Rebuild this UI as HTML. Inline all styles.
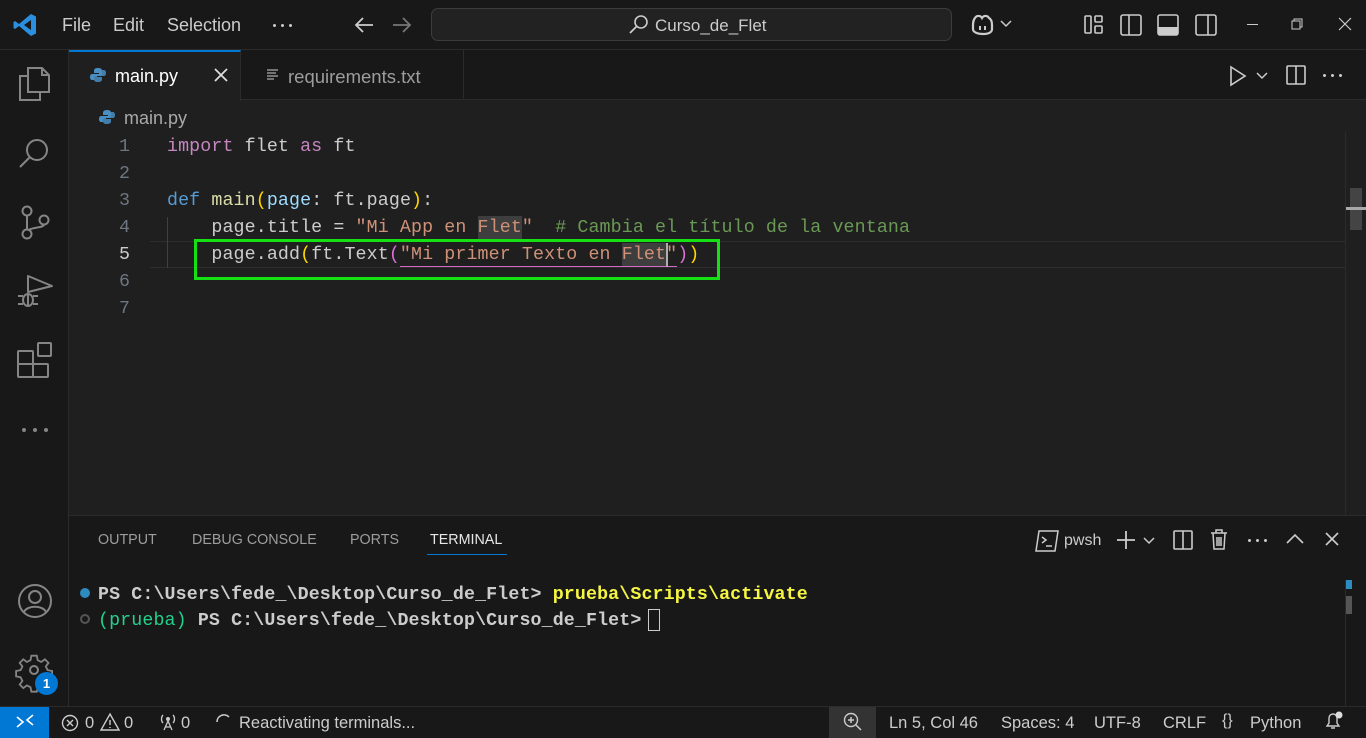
<!DOCTYPE html>
<html><head><meta charset="utf-8"><style>
*{box-sizing:border-box;margin:0;padding:0}
body{width:1366px;height:738px;overflow:hidden;background:#1f1f1f;font-family:"Liberation Sans",sans-serif;color:#ccc;position:relative}
.abs{position:absolute}
.mono{font-family:"Liberation Mono",monospace;font-size:18.3px;white-space:pre;letter-spacing:0.12px}
svg{position:absolute;overflow:visible}
.ic{stroke:#858585;fill:none;stroke-width:2}
.dots{position:absolute;display:flex;gap:5px}
.dots i{display:block;width:3px;height:3px;border-radius:50%;background:#ccc}
</style></head><body>
<!-- title bar -->
<div class="abs" style="left:0;top:0;width:1366px;height:50px;background:#181818;border-bottom:1px solid #2b2b2b"></div>
<svg style="left:12px;top:12px" width="26" height="26" viewBox="0 0 26 26"><path d="M19 2 L24 4.5 V21.5 L19 24 L7 14 L3 17 L1.5 16 V10 L3 9 L7 12 Z M19 8 L12 13 L19 18 Z" fill="#2a8fe0" fill-rule="evenodd"/></svg>
<div class="abs" style="left:62px;top:15px;font-size:18px;color:#ccc">File</div>
<div class="abs" style="left:113px;top:15px;font-size:18px;color:#ccc">Edit</div>
<div class="abs" style="left:167px;top:15px;font-size:18px;color:#ccc">Selection</div>
<div class="dots" style="left:273px;top:24px"><i></i><i></i><i></i></div>
<svg style="left:354px;top:16px" width="20" height="18"><path d="M19 9H2M9 2L2 9L9 16" stroke="#ccc" stroke-width="1.8" fill="none"/></svg>
<svg style="left:392px;top:16px" width="20" height="18"><path d="M1 9H18M11 2L18 9L11 16" stroke="#777" stroke-width="1.8" fill="none"/></svg>
<div class="abs" style="left:431px;top:8px;width:521px;height:33px;border:1px solid #3c3c3c;border-radius:7px;background:#222"></div>
<svg style="left:628px;top:14px" width="22" height="22"><circle cx="13" cy="8" r="6" style="stroke:#ccc;stroke-width:1.6;fill:none"/><path d="M9 12L2 19" stroke="#ccc" stroke-width="1.8"/></svg>
<div class="abs" style="left:655px;top:16px;font-size:17px;color:#ccc">Curso_de_Flet</div>
<svg style="left:970px;top:13px" width="26" height="24"><path d="M5 5a4 4 0 0 1 7 0a4 4 0 0 1 7 0c2 1 3 4 3 7v4c0 3-3 5-9 5s-10-2-10-5v-4c0-3 1-6 2-7z" fill="none" stroke="#ccc" stroke-width="2.2"/><rect x="9" y="13" width="2" height="4" fill="#ccc"/><rect x="14" y="13" width="2" height="4" fill="#ccc"/></svg>
<svg style="left:1000px;top:20px" width="12" height="8"><path d="M1 1L6 6L11 1" stroke="#ccc" stroke-width="1.5" fill="none"/></svg>
<svg style="left:1084px;top:15px" width="20" height="20"><rect x="1" y="1" width="6" height="17" rx="1" fill="none" stroke="#ccc" stroke-width="1.6"/><rect x="11" y="1" width="7" height="6" rx="1" fill="none" stroke="#ccc" stroke-width="1.6"/><rect x="11" y="11" width="7" height="7" rx="1" fill="none" stroke="#ccc" stroke-width="1.6"/></svg>
<svg style="left:1120px;top:14px" width="22" height="22"><rect x="1" y="1" width="20" height="20" rx="2" fill="none" stroke="#ccc" stroke-width="1.6"/><path d="M9 1V21" stroke="#ccc" stroke-width="1.6"/></svg>
<svg style="left:1157px;top:14px" width="22" height="22"><rect x="1" y="1" width="20" height="20" rx="2" fill="none" stroke="#ccc" stroke-width="1.6"/><rect x="1" y="13" width="20" height="8" fill="#ccc"/></svg>
<svg style="left:1195px;top:14px" width="22" height="22"><rect x="1" y="1" width="20" height="20" rx="2" fill="none" stroke="#ccc" stroke-width="1.6"/><path d="M13 1V21" stroke="#ccc" stroke-width="1.6"/></svg>
<div class="abs" style="left:1247px;top:24px;width:11px;height:1px;background:#ccc"></div>
<svg style="left:1291px;top:18px" width="12" height="12"><rect x="1" y="3" width="8" height="8" fill="none" stroke="#ccc"/><path d="M3 3V1H11V9H9" fill="none" stroke="#ccc"/></svg>
<svg style="left:1338px;top:17px" width="14" height="14"><path d="M1 1L13 13M13 1L1 13" stroke="#ccc" stroke-width="1.2"/></svg>

<!-- activity bar -->
<div class="abs" style="left:0;top:50px;width:69px;height:656px;background:#181818;border-right:1px solid #2b2b2b"></div>
<svg style="left:18px;top:66px" width="34" height="36"><path d="M10 2H24L31 9V26H10Z M24 2V9H31" class="ic"/><path d="M10 10H2V34H22V26" class="ic"/></svg>
<svg style="left:18px;top:135px" width="34" height="34"><circle cx="19" cy="15" r="10" class="ic"/><path d="M12 22L2 32" class="ic"/></svg>
<svg style="left:20px;top:205px" width="30" height="36"><circle cx="7" cy="6" r="4.5" class="ic"/><circle cx="7" cy="29" r="4.5" class="ic"/><circle cx="24" cy="15" r="4.5" class="ic"/><path d="M7 10.5V24.5M24 19.5C24 23 12 22 9 25" class="ic"/></svg>
<svg style="left:16px;top:274px" width="38" height="36"><path d="M12 2V18L36 12L12 2Z" class="ic" stroke-linejoin="round"/><ellipse cx="12" cy="26" rx="5" ry="6" class="ic"/><path d="M2 22H7M2 30H7M17 22H22M17 30H22M12 20V32" class="ic"/></svg>
<svg style="left:17px;top:342px" width="36" height="38"><rect x="1" y="9" width="15" height="13" class="ic" rx="1"/><rect x="1" y="22" width="15" height="13" class="ic" rx="1"/><rect x="16" y="22" width="15" height="13" class="ic" rx="1"/><rect x="21" y="1" width="13" height="13" class="ic" rx="1"/></svg>
<div class="dots" style="left:22px;top:428px;gap:7px"><i style="background:#858585;width:4px;height:4px"></i><i style="background:#858585;width:4px;height:4px"></i><i style="background:#858585;width:4px;height:4px"></i></div>
<svg style="left:17px;top:583px" width="36" height="36"><circle cx="18" cy="18" r="16" class="ic"/><circle cx="18" cy="14" r="6" class="ic"/><path d="M7 29C10 22 26 22 29 29" class="ic"/></svg>
<svg style="left:17px;top:653px" width="36" height="36"><path d="M15 2h6l1 5 4 2 4-3 4 4-3 4 2 4 5 1v6l-5 1-2 4 3 4-4 4-4-3-4 2-1 5h-6l-1-5-4-2-4 3-4-4 3-4-2-4-5-1v-6l5-1 2-4-3-4 4-4 4 3 4-2z" transform="scale(0.9) translate(1,1)" class="ic"/><circle cx="17" cy="17" r="4" class="ic"/></svg>
<div class="abs" style="left:35px;top:672px;width:23px;height:23px;border-radius:50%;background:#0078d4;color:#fff;font-size:13px;font-weight:bold;text-align:center;line-height:23px">1</div>

<!-- tabs -->
<div class="abs" style="left:69px;top:50px;width:1297px;height:50px;background:#181818;border-bottom:1px solid #2b2b2b"></div>
<div class="abs" style="left:69px;top:50px;width:172px;height:51px;background:#1f1f1f;border-top:2px solid #0078d4;border-right:1px solid #2b2b2b"></div>
<div class="abs" style="left:241px;top:50px;width:223px;height:50px;border-right:1px solid #2b2b2b"></div>
<svg style="left:90px;top:67px" width="16" height="16"><path d="M8 1C4 1 4 3 4 4V6H9V7H2C1 7 0 8 0 10S1 13 2 13H4V11C4 10 5 9 6 9H10C11 9 12 8 12 7V4C12 2 11 1 8 1Z" fill="#4a8fc4"/><path d="M8 15C12 15 12 13 12 12V10H7V9H14C15 9 16 8 16 6S15 3 14 3H12V5C12 6 11 7 10 7H6C5 7 4 8 4 9V12C4 14 5 15 8 15Z" fill="#4a8fc4" opacity=".85"/></svg>
<div class="abs" style="left:115px;top:66px;font-size:18px;color:#fff">main.py</div>
<svg style="left:214px;top:68px" width="14" height="14"><path d="M1 1L13 13M13 1L1 13" stroke="#ddd" stroke-width="1.8"/></svg>
<svg style="left:267px;top:69px" width="12" height="12"><path d="M0 1H11M0 4H9M0 7H11M0 10H7" stroke="#aaa" stroke-width="1.3"/></svg>
<div class="abs" style="left:288px;top:66px;font-size:18.5px;color:#9d9d9d">requirements.txt</div>
<svg style="left:1230px;top:66px" width="16" height="20"><path d="M1 1L15 10L1 19Z" fill="none" stroke="#ccc" stroke-width="1.6"/></svg>
<svg style="left:1256px;top:72px" width="12" height="8"><path d="M1 1L6 6L11 1" stroke="#ccc" stroke-width="1.5" fill="none"/></svg>
<svg style="left:1286px;top:65px" width="20" height="20"><rect x="1" y="1" width="18" height="18" rx="1" fill="none" stroke="#ccc" stroke-width="1.6"/><path d="M10 1V19" stroke="#ccc" stroke-width="1.6"/></svg>
<div class="dots" style="left:1323px;top:74px"><i></i><i></i><i></i></div>

<!-- breadcrumb -->
<svg style="left:99px;top:109px" width="16" height="16"><path d="M8 1C4 1 4 3 4 4V6H9V7H2C1 7 0 8 0 10S1 13 2 13H4V11C4 10 5 9 6 9H10C11 9 12 8 12 7V4C12 2 11 1 8 1Z" fill="#4a8fc4"/><path d="M8 15C12 15 12 13 12 12V10H7V9H14C15 9 16 8 16 6S15 3 14 3H12V5C12 6 11 7 10 7H6C5 7 4 8 4 9V12C4 14 5 15 8 15Z" fill="#4a8fc4" opacity=".85"/></svg>
<div class="abs" style="left:124px;top:108px;font-size:18px;color:#a9a9a9">main.py</div>

<!-- code -->
<div class="abs" style="left:150px;top:241px;width:1195px;height:27px;border-top:1px solid #2e2e2e;border-bottom:1px solid #2e2e2e"></div>
<div class="abs" style="left:167px;top:217px;width:1px;height:27px;background:#404040"></div>
<div class="abs" style="left:167px;top:244px;width:1px;height:24px;background:#404040"></div>
<div class="abs" style="left:478px;top:216px;width:44px;height:24px;background:#3e3e3e"></div>
<div class="abs" style="left:622px;top:243px;width:44px;height:24px;background:#3e3e3e"></div>
<div class="abs" style="left:400px;top:266px;width:277px;height:1px;background:#d567c9"></div>
<div class="abs mono" style="left:115px;top:134px;line-height:27px;color:#6e7681;text-align:right;width:15px;letter-spacing:0">1
2
3
4
<span style="color:#ccc">5</span>
6
7</div>
<div class="abs mono" style="left:167px;top:134px;line-height:27px;color:#cccccc"><span style="color:#c586c0">import</span> flet <span style="color:#c586c0">as</span> ft

<span style="color:#569cd6">def</span> <span style="color:#dcdcaa">main</span><span style="color:#ffd700">(</span><span style="color:#9cdcfe">page</span>: ft.page<span style="color:#ffd700">)</span>:
    page.title = <span style="color:#ce9178">"Mi App en Flet"</span>  <span style="color:#6a9955"># Cambia el título de la ventana</span>
    page.add<span style="color:#ffd700">(</span>ft.Text<span style="color:#da70d6">(</span><span style="color:#ce9178">"Mi primer Texto en Flet"</span><span style="color:#da70d6">)</span><span style="color:#ffd700">)</span></div>
<div class="abs" style="left:666px;top:243px;width:2px;height:24px;background:#aeafad"></div>
<div class="abs" style="left:194px;top:239px;width:526px;height:41px;border:3px solid #14e014"></div>
<!-- scrollbar -->
<div class="abs" style="left:1345px;top:132px;width:1px;height:383px;background:#2b2b2b"></div>
<div class="abs" style="left:1350px;top:188px;width:12px;height:42px;background:#444"></div>
<div class="abs" style="left:1346px;top:207px;width:20px;height:3px;background:#aaa"></div>

<!-- panel -->
<div class="abs" style="left:69px;top:515px;width:1297px;height:191px;background:#181818;border-top:1px solid #2b2b2b"></div>
<div class="abs" style="left:98px;top:532px;font-size:14.3px;color:#9d9d9d">OUTPUT</div>
<div class="abs" style="left:192px;top:532px;font-size:14.3px;color:#9d9d9d">DEBUG CONSOLE</div>
<div class="abs" style="left:350px;top:532px;font-size:14.3px;color:#9d9d9d">PORTS</div>
<div class="abs" style="left:430px;top:532px;font-size:14.3px;color:#e7e7e7">TERMINAL</div>
<div class="abs" style="left:427px;top:554px;width:80px;height:1px;background:#0078d4"></div>
<svg style="left:1035px;top:530px" width="24" height="22"><path d="M4 1H23L20 21H1Z" fill="none" stroke="#ccc" stroke-width="1.5"/><path d="M7 7L11 10L7 13M11 16H17" stroke="#ccc" stroke-width="1.5" fill="none"/></svg>
<div class="abs" style="left:1064px;top:532px;font-size:16px;color:#ccc">pwsh</div>
<svg style="left:1116px;top:530px" width="20" height="20"><path d="M10 1V19M1 10H19" stroke="#ccc" stroke-width="1.8"/></svg>
<svg style="left:1143px;top:537px" width="12" height="8"><path d="M1 1L6 6L11 1" stroke="#ccc" stroke-width="1.5" fill="none"/></svg>
<svg style="left:1173px;top:530px" width="20" height="20"><rect x="1" y="1" width="18" height="18" rx="1" fill="none" stroke="#ccc" stroke-width="1.6"/><path d="M10 1V19" stroke="#ccc" stroke-width="1.6"/></svg>
<svg style="left:1210px;top:529px" width="18" height="21"><path d="M1 4H17M6 4V1H12V4M3 4L4 20H14L15 4M7 8V17M9 8V17M11 8V17" stroke="#ccc" stroke-width="1.5" fill="none"/></svg>
<div class="dots" style="left:1248px;top:539px"><i></i><i></i><i></i></div>
<svg style="left:1286px;top:533px" width="18" height="12"><path d="M1 10L9 2L17 10" stroke="#ccc" stroke-width="1.6" fill="none"/></svg>
<svg style="left:1325px;top:532px" width="14" height="14"><path d="M1 1L13 13M13 1L1 13" stroke="#ccc" stroke-width="1.6"/></svg>
<div class="abs" style="left:80px;top:588px;width:10px;height:10px;border-radius:50%;background:#2e8bc0"></div>
<div class="abs" style="left:80px;top:614px;width:10px;height:10px;border-radius:50%;border:2px solid #555"></div>
<div class="abs mono" style="left:98px;top:582px;line-height:26px;color:#ccc;font-weight:bold">PS C:\Users\fede_\Desktop\Curso_de_Flet&gt; <span style="color:#f5f543">prueba\Scripts\activate</span>
<span style="color:#23d18b;font-weight:normal">(prueba)</span> PS C:\Users\fede_\Desktop\Curso_de_Flet&gt; </div>
<div class="abs" style="left:648px;top:609px;width:12px;height:22px;border:1px solid #ccc"></div>
<div class="abs" style="left:1345px;top:580px;width:1px;height:126px;background:#2b2b2b"></div>
<div class="abs" style="left:1346px;top:580px;width:6px;height:9px;background:#2e8bc0"></div>
<div class="abs" style="left:1346px;top:596px;width:6px;height:18px;background:#555"></div>

<!-- status bar -->
<div class="abs" style="left:0;top:706px;width:1366px;height:32px;background:#181818;border-top:1px solid #2b2b2b"></div>
<div class="abs" style="left:0;top:707px;width:49px;height:31px;background:#0078d4"></div>
<svg style="left:16px;top:714px" width="18" height="16"><path d="M1 13L7 8L1 3M17 1L11 6L17 11" stroke="#fff" stroke-width="1.6" fill="none"/></svg>
<svg style="left:61px;top:714px" width="18" height="18"><circle cx="9" cy="9" r="7.5" stroke="#ccc" stroke-width="1.4" fill="none"/><path d="M6 6L12 12M12 6L6 12" stroke="#ccc" stroke-width="1.4"/></svg>
<div class="abs" style="left:85px;top:714px;font-size:16.5px;color:#ccc">0</div>
<svg style="left:100px;top:713px" width="20" height="18"><path d="M10 1L19 17H1Z" stroke="#ccc" stroke-width="1.4" fill="none"/><path d="M10 7V12M10 14V15" stroke="#ccc" stroke-width="1.4"/></svg>
<div class="abs" style="left:124px;top:714px;font-size:16.5px;color:#ccc">0</div>
<svg style="left:158px;top:713px" width="20" height="18"><circle cx="10" cy="6" r="2" fill="#ccc"/><path d="M10 8L6 17M10 8L14 17M7 14H13M5 2C3 4 3 8 5 10M15 2C17 4 17 8 15 10" stroke="#ccc" stroke-width="1.3" fill="none"/></svg>
<div class="abs" style="left:181px;top:714px;font-size:16.5px;color:#ccc">0</div>
<svg style="left:215px;top:713px" width="18" height="18"><path d="M2 9A7 7 0 0 1 14 4" stroke="#ccc" stroke-width="1.6" fill="none"/></svg>
<div class="abs" style="left:239px;top:714px;font-size:16.5px;color:#ccc">Reactivating terminals...</div>
<div class="abs" style="left:829px;top:707px;width:47px;height:31px;background:#333"></div>
<svg style="left:843px;top:712px" width="20" height="20"><circle cx="8" cy="8" r="6.5" stroke="#ccc" stroke-width="1.4" fill="none"/><path d="M8 5V11M5 8H11M13 13L18 18" stroke="#ccc" stroke-width="1.5"/></svg>
<div class="abs" style="left:889px;top:714px;font-size:16.5px;color:#ccc">Ln 5, Col 46</div>
<div class="abs" style="left:1001px;top:714px;font-size:16.5px;color:#ccc">Spaces: 4</div>
<div class="abs" style="left:1094px;top:714px;font-size:16.5px;color:#ccc">UTF-8</div>
<div class="abs" style="left:1163px;top:714px;font-size:16.5px;color:#ccc">CRLF</div>
<div class="abs" style="left:1222px;top:712px;font-size:16px;color:#ccc">{}</div>
<div class="abs" style="left:1250px;top:714px;font-size:16.5px;color:#ccc">Python</div>
<svg style="left:1324px;top:711px" width="20" height="20"><path d="M3 15H15L13 12V7A4 4 0 0 0 5 7V12Z M7 17H11" stroke="#ccc" stroke-width="1.4" fill="none"/><circle cx="15" cy="4" r="3.5" fill="#ddd"/></svg>
</body></html>
